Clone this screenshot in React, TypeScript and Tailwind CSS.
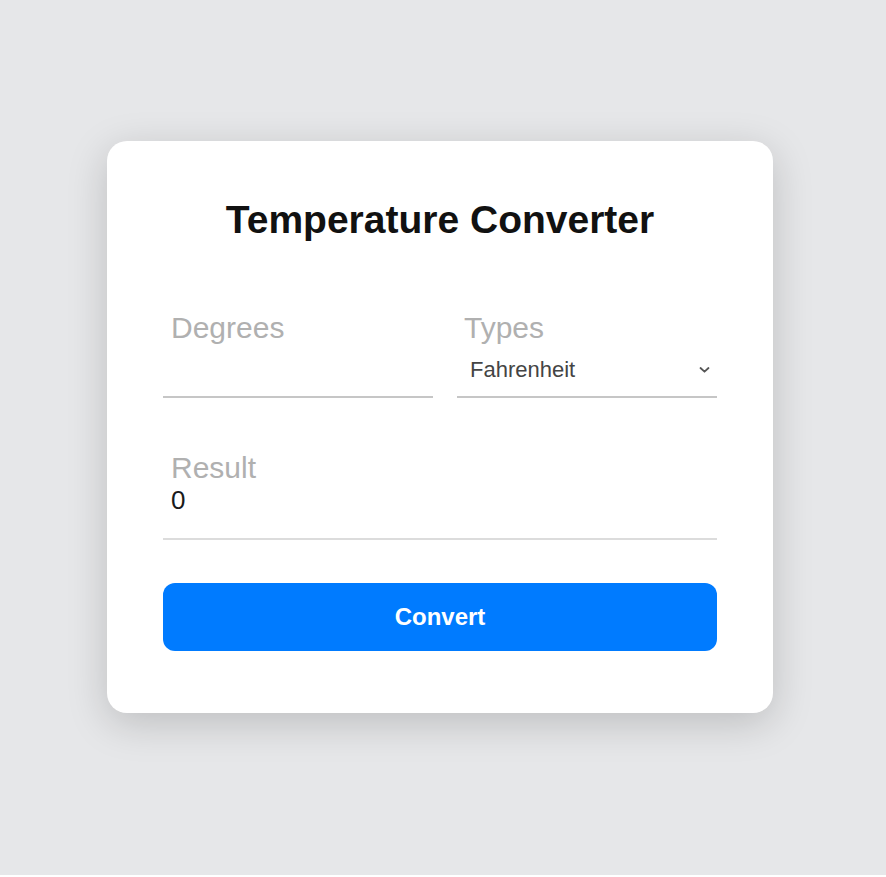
import { useState } from "react";

function Chevron() {
  return (
    <svg width="11" height="7" viewBox="0 0 11 7" fill="none" className="absolute right-[7px] top-1/2 -translate-y-1/2 pointer-events-none">
      <path d="M1.5 1.5L5.5 5.2L9.5 1.5" stroke="#555" strokeWidth="1.8" strokeLinecap="round" strokeLinejoin="round" />
    </svg>
  );
}

export default function App() {
  const [degrees, setDegrees] = useState("");
  const [type, setType] = useState("Fahrenheit");
  const [result, setResult] = useState(0);

  const convert = () => {
    const d = parseFloat(degrees);
    if (isNaN(d)) {
      setResult(0);
      return;
    }
    if (type === "Fahrenheit") setResult(Math.round(((d - 32) * 5) / 9 * 100) / 100);
    else setResult(Math.round(((d * 9) / 5 + 32) * 100) / 100);
  };

  return (
    <div className="h-[875px] bg-[#e6e7e9] pt-[141px] font-['Liberation_Sans',Arial,sans-serif]">
      <div className="ml-[107px] w-[666px] rounded-[20px] bg-white px-14 pt-[57px] pb-[62px] shadow-[0_10px_40px_rgba(0,0,0,0.18)]">
        <h1 className="text-center text-[39px] leading-[44px] font-bold text-[#111]">Temperature Converter</h1>

        <div className="mt-[68px] grid grid-cols-[270px_1fr] gap-6">
          <div className="flex flex-col border-b-2 border-[#c6c6c6]">
            <label className="pl-[8px] text-[30px] leading-[36px] text-[#b0b0b0]">Degrees</label>
            <input
              value={degrees}
              onChange={(e) => setDegrees(e.target.value)}
              className="flex-1 bg-transparent pl-[8px] text-[22px] text-[#333] outline-none"
            />
          </div>
          <div className="flex flex-col border-b-2 border-[#c6c6c6]">
            <label className="pl-[7px] text-[30px] leading-[36px] text-[#b0b0b0]">Types</label>
            <div className="relative mt-[10px] mb-[12px]">
              <select
                value={type}
                onChange={(e) => setType(e.target.value)}
                className="w-full appearance-none bg-transparent pl-[13px] text-[22px] leading-[28px] h-[28px] text-[#444] outline-none"
              >
                <option>Fahrenheit</option>
                <option>Celsius</option>
              </select>
              <Chevron />
            </div>
          </div>
        </div>

        <div className="mt-[53px] border-b-2 border-[#dcdcdc] pb-[23px]">
          <div className="pl-[8px] text-[30px] leading-[34px] text-[#b0b0b0]">Result</div>
          <div className="pl-[8px] text-[26px] leading-[30px] text-[#1a1a1a]">{result}</div>
        </div>

        <button
          onClick={convert}
          className="mt-[43px] h-[68px] w-full rounded-[12px] bg-[#007bff] text-[24px] font-bold text-white"
        >
          Convert
        </button>
      </div>
    </div>
  );
}
